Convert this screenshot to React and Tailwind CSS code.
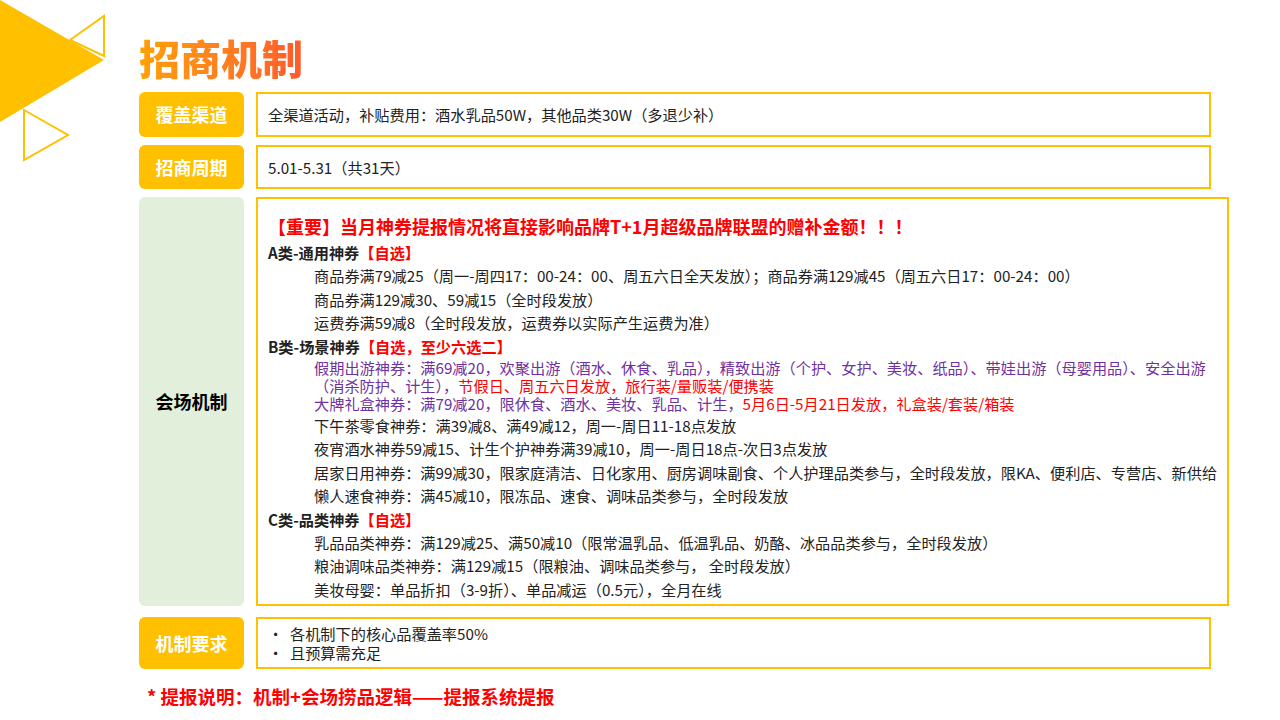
export default function App() {
  const F = { fontFamily: '"Noto Sans CJK SC","Noto Sans",sans-serif' };
  const Label = ({ children, green }) => (
    <div className={`w-[105px] shrink-0 rounded-md flex items-center justify-center font-bold text-[18px] ${green ? "bg-[#e2efda] text-black" : "bg-[#ffc000] text-white"}`}>{children}</div>
  );
  const Box = ({ children, cls }) => (
    <div className={`flex-1 border-2 border-[#ffc000] ${cls}`}>{children}</div>
  );
  const Item = ({ children }) => <div className="pl-[46px] leading-[23.5px] whitespace-nowrap">{children}</div>;
  const Head = ({ a, b }) => <div className="font-bold leading-[23px]">{a}<span className="text-[#ff0000]">{b}</span></div>;
  return (
    <div style={F} className="relative w-[1280px] h-[720px] bg-white overflow-hidden text-[15.2px] text-[#222]">
      <svg className="absolute left-0 top-0" width="110" height="170" viewBox="0 0 110 170">
        <polygon points="0,0 104,60 0,122" fill="#ffc000" />
        <polygon points="70,40 104,16 104,56" fill="none" stroke="#ffc000" strokeWidth="2" />
        <polygon points="24,110 68,135 24,160" fill="none" stroke="#ffc000" strokeWidth="2" />
      </svg>
      <div className="pl-[139px] pt-[30px]">
        <div className="text-[41px] font-black leading-[54px] bg-gradient-to-r from-[#ffa000] to-[#ff5a2a] bg-clip-text text-transparent w-fit">招商机制</div>
        <div className="mt-[8px] w-[1072px] flex flex-col gap-[8px]">
          <div className="flex gap-[12px] h-[45px]"><Label>覆盖渠道</Label><Box cls="flex items-center px-[10px]">全渠道活动，补贴费用：酒水乳品50W，其他品类30W（多退少补）</Box></div>
          <div className="flex gap-[12px] h-[44px]"><Label>招商周期</Label><Box cls="flex items-center px-[10px]">5.01-5.31（共31天）</Box></div>
          <div className="flex gap-[12px] h-[409px]"><Label green>会场机制</Label>
            <Box cls="px-[10px] pt-[12px]">
              <div className="text-[#ff0000] font-bold text-[18px] leading-[30px]">【重要】当月神券提报情况将直接影响品牌T+1月超级品牌联盟的赠补金额！！！</div>
              <Head a="A类-通用神券" b="【自选】" />
              <Item>商品券满79减25（周一-周四17：00-24：00、周五六日全天发放）；商品券满129减45（周五六日17：00-24：00）</Item>
              <Item>商品券满129减30、59减15（全时段发放）</Item>
              <Item>运费券满59减8（全时段发放，运费券以实际产生运费为准）</Item>
              <Head a="B类-场景神券" b="【自选，至少六选二】" />
              <div className="pl-[46px] leading-[18px] text-[#7030a0]">假期出游神券：满69减20，欢聚出游（酒水、休食、乳品），精致出游（个护、女护、美妆、纸品）、带娃出游（母婴用品）、安全出游（消杀防护、计生），<span className="text-[#ff0000]">节假日、周五六日发放，旅行装/量贩装/便携装</span></div>
              <div className="pl-[46px] leading-[18px] text-[#7030a0] mb-[2px] whitespace-nowrap">大牌礼盒神券：满79减20，限休食、酒水、美妆、乳品、计生，<span className="text-[#ff0000]">5月6日-5月21日发放，礼盒装/套装/箱装</span></div>
              <Item>下午茶零食神券：满39减8、满49减12，周一-周日11-18点发放</Item>
              <Item>夜宵酒水神券59减15、计生个护神券满39减10，周一-周日18点-次日3点发放</Item>
              <Item>居家日用神券：满99减30，限家庭清洁、日化家用、厨房调味副食、个人护理品类参与，全时段发放，限KA、便利店、专营店、新供给</Item>
              <Item>懒人速食神券：满45减10，限冻品、速食、调味品类参与，全时段发放</Item>
              <Head a="C类-品类神券" b="【自选】" />
              <Item>乳品品类神券：满129减25、满50减10（限常温乳品、低温乳品、奶酪、冰品品类参与，全时段发放）</Item>
              <Item>粮油调味品类神券：满129减15（限粮油、调味品类参与， 全时段发放）</Item>
              <Item>美妆母婴：单品折扣（3-9折）、单品减运（0.5元），全月在线</Item>
            </Box>
          </div>
          <div className="flex gap-[12px] h-[52px] mt-[3px]"><Label>机制要求</Label>
            <Box cls="px-[10px] flex flex-col justify-center leading-[19px]">
              <div>•&nbsp;&nbsp;各机制下的核心品覆盖率50%</div>
              <div>•&nbsp;&nbsp;且预算需充足</div>
            </Box>
          </div>
        </div>
        <div className="mt-[14px] ml-[8px] text-[#ff0000] font-bold text-[18.5px]">* 提报说明：机制+会场捞品逻辑——提报系统提报</div>
      </div>
    </div>
  );
}
